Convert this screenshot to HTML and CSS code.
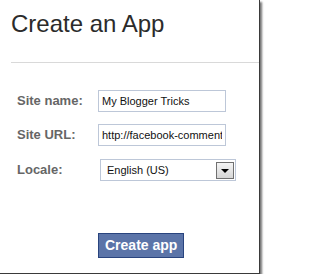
FILE: index.html
```html
<!DOCTYPE html>
<html>
<head>
<meta charset="utf-8">
<link rel="stylesheet" href="styles.css">
</head>
<body>
<div class="frame">
  <div class="header">
    <h1 class="title">Create an App</h1>
  </div>
  <form class="form">
    <label class="label" for="site-name">Site name:</label>
    <input class="field" id="site-name" type="text" value="My Blogger Tricks">
    <label class="label" for="site-url">Site URL:</label>
    <input class="field" id="site-url" type="text" value="http://facebook-comments-box.blogspot.com/">
    <label class="label">Locale:</label>
    <div class="select">
      <span class="select-text">English (US)</span>
      <span class="select-arrow"><span class="tri"></span></span>
    </div>
    <button class="btn" type="button">Create app</button>
  </form>
</div>
</body>
</html>
```

FILE: styles.css
```css
html, body {
  margin: 0;
  padding: 0;
  background: #fff;
}
.frame {
  box-sizing: border-box;
  width: 260px;
  height: 274px;
  background: #fff;
  border-right: 1px solid #3a3a3a;
  border-bottom: 1px solid #3a3a3a;
  box-shadow: 2px 2px 2px rgba(0,0,0,0.55);
  padding-top: 10px;
  font-family: "Liberation Sans", Arial, sans-serif;
}
.header {
  margin-left: 11px;
  padding-bottom: 24px;
  border-bottom: 1px solid #d9d9d9;
}
.title {
  margin: 0;
  font-size: 24px;
  line-height: 28px;
  font-weight: normal;
  color: #2b2b2b;
}
.form {
  display: grid;
  grid-template-columns: 81px auto;
  row-gap: 12px;
  align-items: center;
  justify-items: start;
  padding-left: 17px;
  margin: 27px 0 0 0;
}
.label {
  font-size: 13px;
  font-weight: bold;
  color: #666;
  line-height: 16px;
}
.field {
  box-sizing: border-box;
  width: 128px;
  height: 22px;
  margin: 0;
  padding: 0 3px;
  border: 1px solid #bdc7d8;
  font-family: "Liberation Sans", Arial, sans-serif;
  font-size: 11px;
  color: #111;
  background: #fff;
  outline: none;
}
.select {
  box-sizing: border-box;
  width: 136px;
  height: 22px;
  margin: 1px 0 0 2px;
  border: 1px solid #bdc7d8;
  display: flex;
  align-items: center;
  justify-content: space-between;
  padding: 0 1px 0 6px;
}
.select-text {
  font-size: 11px;
  color: #111;
}
.select-arrow {
  box-sizing: border-box;
  width: 18px;
  height: 17px;
  border: 1px solid #707070;
  background: linear-gradient(#f4f4f4, #d6d6d6);
  display: flex;
  align-items: center;
  justify-content: center;
  padding-top: 2px;
}
.tri {
  width: 0;
  height: 0;
  border-left: 4px solid transparent;
  border-right: 4px solid transparent;
  border-top: 4px solid #000;
}
.btn {
  grid-column: 2;
  margin-top: 40px;
  box-sizing: border-box;
  height: 25px;
  padding: 3px 6px;
  border: 1px solid #29447e;
  background: #5b74a8;
  color: #fff;
  font-family: "Liberation Sans", Arial, sans-serif;
  font-size: 14px;
  font-weight: bold;
  line-height: 17px;
}
```
